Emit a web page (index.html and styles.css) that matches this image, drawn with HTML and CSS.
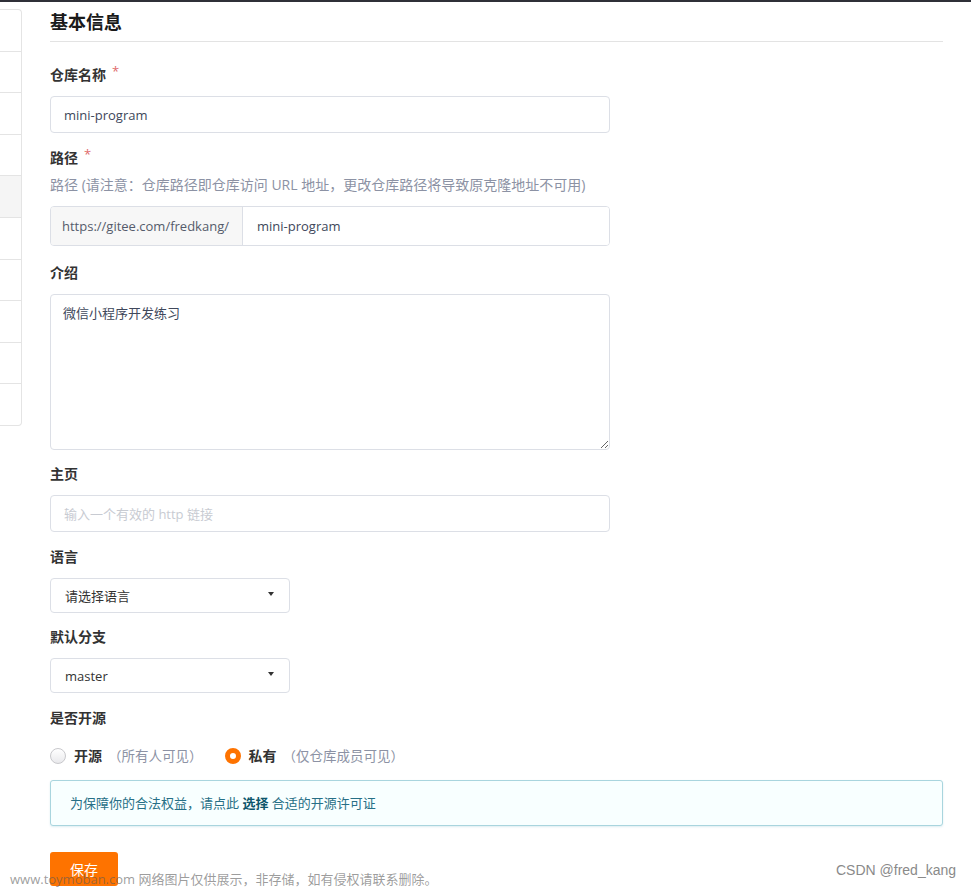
FILE: index.html
```html
<!DOCTYPE html>
<html lang="zh-CN">
<head>
  <meta charset="UTF-8">
  <meta name="viewport" content="width=device-width, initial-scale=1.0">
  <title>仓库设置 - 基本信息</title>
  <link rel="stylesheet" href="styles.css">
</head>
<body>
  <div class="topbar"></div>

  <div class="page">
    <!-- 左侧菜单 (大部分在视口外) -->
    <aside class="side-menu">
      <div class="side-item"></div>
      <div class="side-item"></div>
      <div class="side-item"></div>
      <div class="side-item"></div>
      <div class="side-item active"></div>
      <div class="side-item"></div>
      <div class="side-item"></div>
      <div class="side-item"></div>
      <div class="side-item"></div>
      <div class="side-item"></div>
    </aside>

    <main class="settings">
      <h2 class="section-title">基本信息</h2>

      <form class="repo-form">
        <!-- 仓库名称 -->
        <div class="field">
          <label class="field-label required" for="repo-name">仓库名称</label>
          <input class="text-input" type="text" id="repo-name" value="mini-program">
        </div>

        <!-- 路径 -->
        <div class="field field-path">
          <label class="field-label required" for="repo-path">路径</label>
          <p class="field-help">路径 (请注意：仓库路径即仓库访问 URL 地址，更改仓库路径将导致原克隆地址不可用)</p>
          <div class="input-group">
            <span class="input-addon">https://gitee.com/fredkang/</span>
            <input class="group-input" type="text" id="repo-path" value="mini-program">
          </div>
        </div>

        <!-- 介绍 -->
        <div class="field">
          <label class="field-label" for="repo-desc">介绍</label>
          <textarea class="text-area" id="repo-desc">微信小程序开发练习</textarea>
        </div>

        <!-- 主页 -->
        <div class="field">
          <label class="field-label" for="repo-home">主页</label>
          <input class="text-input" type="text" id="repo-home" placeholder="输入一个有效的 http 链接">
        </div>

        <!-- 语言 -->
        <div class="field">
          <label class="field-label">语言</label>
          <div class="dropdown">
            <span class="dropdown-text">请选择语言</span>
            <i class="dropdown-caret"></i>
          </div>
        </div>

        <!-- 默认分支 -->
        <div class="field">
          <label class="field-label">默认分支</label>
          <div class="dropdown">
            <span class="dropdown-text">master</span>
            <i class="dropdown-caret"></i>
          </div>
        </div>

        <!-- 是否开源 -->
        <div class="field">
          <label class="field-label">是否开源</label>
          <div class="radio-row">
            <label class="radio">
              <span class="radio-dot"></span>
              <span class="radio-name">开源</span>
              <span class="radio-note">（所有人可见）</span>
            </label>
            <label class="radio checked">
              <span class="radio-dot"></span>
              <span class="radio-name">私有</span>
              <span class="radio-note">（仅仓库成员可见）</span>
            </label>
          </div>
        </div>

        <div class="info-message">
          为保障你的合法权益，请点此 <a href="#" class="info-link">选择</a> 合适的开源许可证
        </div>

        <button type="button" class="btn-save">保存</button>
      </form>
    </main>
  </div>

  <div class="watermark">www.toymoban.com 网络图片仅供展示，非存储，如有侵权请联系删除。</div>
  <div class="csdn-mark">CSDN @fred_kang</div>
</body>
</html>
```

FILE: styles.css
```css
body {
  margin: 0;
  padding: 0;
  background-color: #ffffff;
  font-family: "Open Sans", "Noto Sans CJK SC", sans-serif;
  font-size: 13px;
  color: #40485b;
  overflow: hidden;
}

.topbar {
  height: 2px;
  background-color: #2f3038;
}

.page {
  display: flex;
  align-items: flex-start;
}

/* 左侧菜单 */
.side-menu {
  width: 21px;
  margin-top: 7px;
  border: 1px solid #e4e4e4;
  border-left: none;
  border-radius: 0 4px 4px 0;
  background-color: #fff;
}

.side-item {
  height: 40.6px;
  border-bottom: 1px solid #e4e4e4;
}

.side-item:last-child {
  border-bottom: none;
}

.side-item.active {
  background-color: #f5f5f5;
}

/* 主体 */
.settings {
  width: 893px;
  margin-left: 28px;
}

.section-title {
  margin: 0;
  padding: 7px 0 6px;
  font-size: 18px;
  line-height: 26px;
  font-weight: bold;
  color: #1a1a1a;
  border-bottom: 1px solid #e3e3e3;
}

.repo-form {
  padding-top: 23px;
}

.field {
  margin-bottom: 14.5px;
}

.field-path {
  margin-bottom: 17px;
}

.field-label {
  display: block;
  margin-bottom: 11px;
  font-size: 14px;
  line-height: 20px;
  font-weight: bold;
  color: #333;
}

.field-label.required::after {
  content: "*";
  margin-left: 6px;
  color: #e06c6c;
  font-size: 13px;
  font-weight: normal;
  vertical-align: top;
  position: relative;
  top: -4px;
}

.field-help {
  margin: -4px 0 11px;
  font-size: 14px;
  line-height: 20px;
  color: #8c92a4;
}

.text-input {
  display: block;
  box-sizing: border-box;
  width: 560px;
  height: 37px;
  padding: 0 13px;
  border: 1px solid #dcdfe6;
  border-radius: 4px;
  font-family: inherit;
  font-size: 13px;
  color: #40485b;
  outline: none;
}

.text-input::placeholder {
  color: #c8cbd2;
}

.input-group {
  display: flex;
  box-sizing: border-box;
  width: 560px;
  height: 40px;
  border: 1px solid #dcdfe6;
  border-radius: 4px;
  overflow: hidden;
}

.input-addon {
  display: flex;
  align-items: center;
  box-sizing: border-box;
  width: 192px;
  padding-left: 11px;
  background-color: #f7f7f7;
  border-right: 1px solid #dcdfe6;
  color: #555b6b;
  font-size: 13px;
  white-space: nowrap;
}

.group-input {
  flex: 1;
  border: none;
  padding: 0 14px;
  font-family: inherit;
  font-size: 13px;
  color: #40485b;
  outline: none;
}

.text-area {
  display: block;
  box-sizing: border-box;
  width: 560px;
  height: 156px;
  padding: 8px 12px;
  border: 1px solid #dcdfe6;
  border-radius: 4px;
  font-family: inherit;
  font-size: 13px;
  line-height: 20px;
  color: #40485b;
  resize: vertical;
  outline: none;
}

.dropdown {
  display: flex;
  align-items: center;
  justify-content: space-between;
  box-sizing: border-box;
  width: 240px;
  height: 35px;
  padding: 0 15px 0 14px;
  border: 1px solid #dcdfe6;
  border-radius: 4px;
  font-size: 13px;
  color: #333;
}

.dropdown-caret {
  width: 0;
  height: 0;
  border-left: 3.5px solid transparent;
  border-right: 3.5px solid transparent;
  border-top: 4px solid #333;
  margin-top: -3px;
}

/* 单选 */
.radio-row {
  display: flex;
  align-items: center;
  gap: 22px;
  padding-top: 7px;
}

.radio {
  display: flex;
  align-items: center;
  line-height: 20px;
  cursor: pointer;
}

.radio-dot {
  box-sizing: border-box;
  width: 16px;
  height: 16px;
  border-radius: 50%;
  border: 1px solid #c8c8cc;
  background: linear-gradient(#ffffff, #e9e9ec);
  margin-right: 8px;
}

.radio.checked .radio-dot {
  border: 5px solid #fe7300;
  background: #fff;
}

.radio-name {
  font-size: 14px;
  font-weight: bold;
  color: #333;
}

.radio-note {
  margin-left: 6px;
  font-size: 13.5px;
  color: #8c92a4;
}

/* 提示 */
.info-message {
  box-sizing: border-box;
  height: 46px;
  margin-top: 14px;
  padding: 0 19px;
  line-height: 44px;
  background-color: #f8ffff;
  border: 1px solid #a9d5de;
  border-radius: 3px;
  box-shadow: 0 1px 2px rgba(169, 213, 222, 0.4);
  color: #276f86;
  font-size: 13px;
}

.info-link {
  color: #0e566c;
  font-weight: bold;
  text-decoration: none;
}

.btn-save {
  display: block;
  margin-top: 26px;
  width: 68px;
  height: 34px;
  border: none;
  border-radius: 3px;
  background-color: #fe7300;
  color: #fff;
  font-family: inherit;
  font-size: 14px;
  cursor: pointer;
}

/* 图片水印 */
.watermark {
  position: absolute;
  left: 10px;
  top: 869px;
  font-size: 13px;
  line-height: 20px;
  color: rgba(90, 90, 90, 0.6);
  white-space: nowrap;
}

.csdn-mark {
  position: absolute;
  left: 836px;
  top: 860px;
  font-family: "Liberation Sans", Arial, sans-serif;
  font-size: 14px;
  line-height: 20px;
  color: #8a8a8a;
}
```
